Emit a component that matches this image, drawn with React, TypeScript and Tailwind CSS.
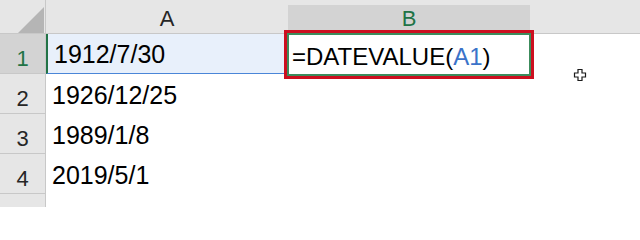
import React from 'react'

const rows = ['1912/7/30', '1926/12/25', '1989/1/8', '2019/5/1', '']

const font = { fontFamily: '"Liberation Sans", Arial, sans-serif' }

function FatCross() {
  return (
    <svg width="14" height="14" viewBox="0 0 14 14" className="absolute left-[573px] top-[68px]">
      <path
        d="M5 1.5h4v3.5h3.5v4h-3.5v3.5h-4v-3.5h-3.5v-4h3.5z"
        fill="#ffffff"
        stroke="#1a1a1a"
        strokeWidth="1.2"
      />
    </svg>
  )
}

export default function App() {
  return (
    <div className="relative w-[640px] h-[207px] overflow-hidden bg-white" style={font}>
      {/* header row */}
      <div className="grid grid-cols-[46px_242px_242px_1fr] h-[34px] bg-[#e6e6e6] border-b border-[#c8c8c8]">
        <div className="relative border-r border-[#c8c8c8]">
          <svg width="46" height="33" className="absolute left-0 top-0">
            <polygon points="18,33 44,33 44,7" fill="#b5b5b5" />
          </svg>
        </div>
        <div className="flex items-end justify-center pb-[3px] text-[22px] leading-none text-[#262626]">A</div>
        <div className="pt-[5px]">
          <div className="h-full bg-[#d3d3d3] flex items-end justify-center pb-[3px] text-[22px] leading-none text-[#217346]">
            B
          </div>
        </div>
        <div />
      </div>

      {/* body rows */}
      {rows.map((val, i) => (
        <div key={i} className="grid grid-cols-[46px_242px_242px_1fr] h-[40px]">
          <div
            className={`flex items-end justify-center pb-[3px] text-[22px] leading-none border-r border-b border-[#c8c8c8] ${
              i === 0 ? 'bg-[#d3d3d3] text-[#217346]' : 'bg-[#e6e6e6] text-[#262626]'
            }`}
          >
            {i < 4 ? i + 1 : ''}
          </div>
          <div
            className={`flex items-end pl-[6px] pb-[6px] text-[25px] leading-none text-black ${
              i === 0 ? 'bg-[#e8f0fb] border-l-2 border-[#217346] border-b border-b-[#4a86d8] pl-[4px]' : ''
            }`}
          >
            {val}
          </div>
          <div className="relative flex items-end pl-[4px] pb-[5px] text-[24px] leading-none text-black">
            {i === 0 && (
              <>
                <span>
                  =DATEVALUE(<span className="text-[#3b73c9]">A1</span>)
                </span>
                <div className="absolute -left-[1px] -top-[1px] -right-[1px] -bottom-[2px] border-2 border-[#3c8c5c]" />
                <div className="absolute -left-[4px] -top-[4px] -right-[4px] -bottom-[5px] border-[3px] border-[#cc0f1f]" />
              </>
            )}
          </div>
          <div />
        </div>
      ))}

      <FatCross />
    </div>
  )
}
